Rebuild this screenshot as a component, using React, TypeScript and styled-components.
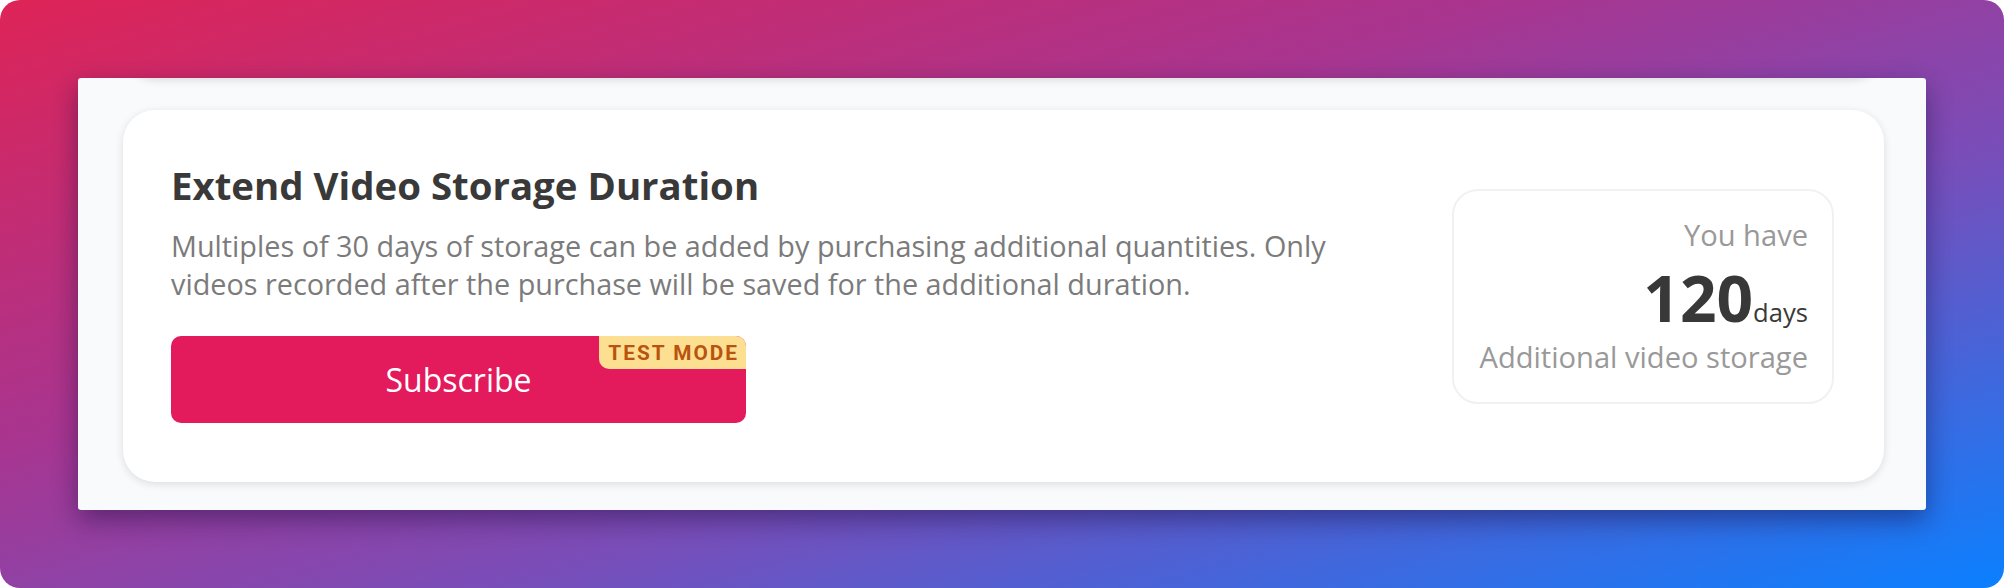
import React from "react";
import styled, { createGlobalStyle } from "styled-components";

const GlobalStyle = createGlobalStyle`
  html, body { margin: 0; padding: 0; background: #ffffff; }
  body { font-family: "Open Sans", "Noto Sans", sans-serif; }
  * { box-sizing: border-box; }
`;

const Frame = styled.div`
  width: 2004px;
  height: 588px;
  border-radius: 20px;
  padding: 78px;
  background: linear-gradient(to bottom right, #de2457 0%, #a83590 38%, #7a4db8 62%, #0a80ff 100%);
  overflow: hidden;
`;

const Panel = styled.div`
  height: 432px;
  background: #f9fafc;
  border-radius: 3px;
  box-shadow: 0 10px 26px rgba(20, 10, 60, 0.45);
  overflow: hidden;
`;

const List = styled.div`
  display: flex;
  flex-direction: column;
  gap: 32px;
  padding: 0 42px 0 45px;
  margin-top: -100px;
`;

const PrevCard = styled.div`
  height: 100px;
  border-radius: 32px;
  background: #ffffff;
  box-shadow: 0 2px 8px rgba(0, 0, 0, 0.13);
`;

const Card = styled.div`
  height: 372px;
  border-radius: 32px;
  background: #ffffff;
  box-shadow: 0 2px 8px rgba(0, 0, 0, 0.12);
  display: flex;
  align-items: center;
  justify-content: space-between;
  padding: 48px 50px 48px 48px;
`;

const Info = styled.div`
  display: flex;
  flex-direction: column;
  align-items: flex-start;
  padding-bottom: 10px;
`;

const Title = styled.h2`
  margin: 0;
  font-size: 38.4px;
  line-height: normal;
  font-weight: 700;
  color: #393939;
`;

const Description = styled.p`
  margin: 16px 0 0;
  max-width: 1190px;
  font-size: 28.8px;
  line-height: 38.4px;
  color: #7b7b7b;
`;

const SubscribeButton = styled.button`
  position: relative;
  margin-top: 33px;
  width: 575px;
  height: 87px;
  border: none;
  border-radius: 10px;
  background: #e31a5c;
  color: #ffffff;
  font-family: "Open Sans", sans-serif;
  font-size: 32px;
  cursor: pointer;
`;

const Badge = styled.span`
  position: absolute;
  top: 0;
  right: 0;
  height: 33px;
  padding: 0 7px 0 9px;
  display: flex;
  align-items: center;
  background: #fddf91;
  color: #b9530f;
  border-radius: 0 10px 0 10px;
  font-family: Roboto, "Liberation Sans", sans-serif;
  font-weight: 700;
  font-size: 20.8px;
  letter-spacing: 2px;
`;

const StatBox = styled.div`
  width: 382px;
  height: 215px;
  border: 2px solid #f1f1f1;
  border-radius: 26px;
  padding: 0 24px;
  display: flex;
  flex-direction: column;
  justify-content: center;
  align-items: flex-end;
  text-align: right;
`;

const StatLabel = styled.div<{ $pull?: boolean }>`
  font-size: 29.1px;
  line-height: 38.4px;
  color: #999999;
  margin-top: ${(p) => (p.$pull ? "-3px" : "0")};
`;

const StatValue = styled.div`
  display: flex;
  align-items: baseline;
  color: #383838;
`;

const Number = styled.span`
  font-size: 64px;
  font-weight: 700;
`;

const Unit = styled.span`
  font-size: 25.6px;
  color: #3a3a3a;
`;

export default function App() {
  return (
    <>
      <GlobalStyle />
      <Frame>
        <Panel>
          <List>
            <PrevCard />
            <Card>
              <Info>
                <Title>Extend Video Storage Duration</Title>
                <Description>
                  Multiples of 30 days of storage can be added by purchasing additional quantities. Only
                  videos recorded after the purchase will be saved for the additional duration.
                </Description>
                <SubscribeButton>
                  Subscribe
                  <Badge>TEST MODE</Badge>
                </SubscribeButton>
              </Info>
              <StatBox>
                <StatLabel>You have</StatLabel>
                <StatValue>
                  <Number>120</Number>
                  <Unit>days</Unit>
                </StatValue>
                <StatLabel $pull>Additional video storage</StatLabel>
              </StatBox>
            </Card>
          </List>
        </Panel>
      </Frame>
    </>
  );
}
